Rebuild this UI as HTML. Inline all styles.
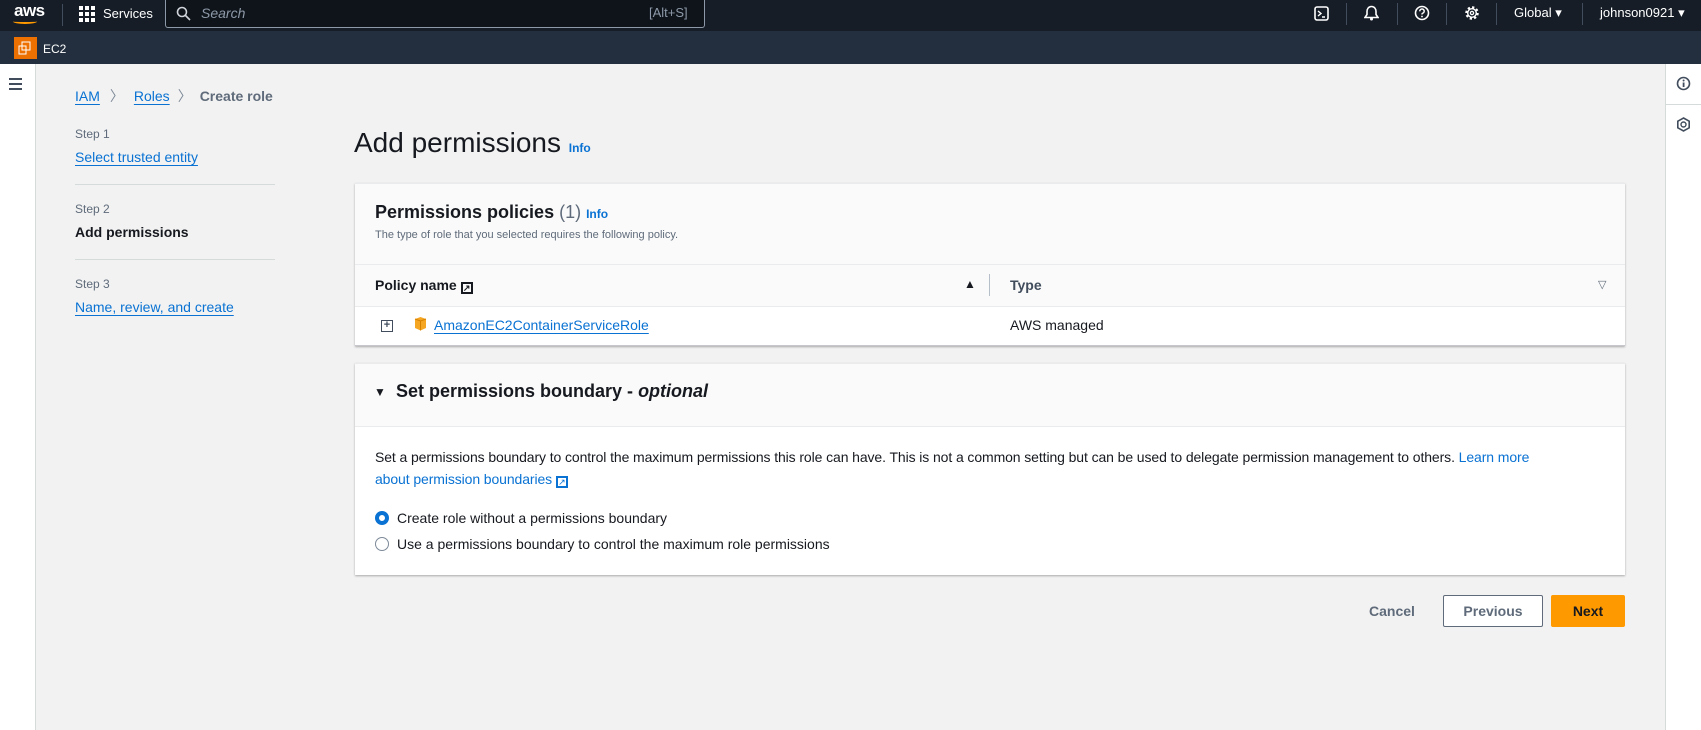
<!DOCTYPE html>
<html><head><style>
*{box-sizing:border-box;margin:0;padding:0}
body{width:1701px;height:730px;overflow:hidden;background:#f2f2f2;font-family:"Liberation Sans",sans-serif;color:#16191f;position:relative;font-size:15px}
.a{position:absolute;white-space:nowrap}
.lnk{color:#0972d3;text-decoration:underline;text-underline-offset:3px}
.top{position:absolute;left:0;top:0;width:1701px;height:31px;background:#161d26}
.sub{position:absolute;left:0;top:31px;width:1701px;height:33px;background:#232f3e}
.w{color:#fff}
.card{position:absolute;background:#fff;box-shadow:0 1px 2px rgba(0,0,0,.3);border-top:1px solid #e9ebed}
</style></head><body>
<div class="top"></div><div class="sub"></div>
<div class="a w" style="left:14px;top:1px;font-size:17px;font-weight:bold;letter-spacing:-0.5px">aws</div>
<div class="a" style="left:13px;top:19px;width:24px;height:5px;border-bottom:2px solid #f90;border-radius:0 0 50% 50%"></div>
<div class="a" style="left:62px;top:4px;width:1px;height:22px;background:#414d5c"></div>
<svg class="a" style="left:79px;top:6px" width="16" height="16"><g fill="#fff"><rect x="0" y="0" width="4" height="4"/><rect x="6" y="0" width="4" height="4"/><rect x="12" y="0" width="4" height="4"/><rect x="0" y="6" width="4" height="4"/><rect x="6" y="6" width="4" height="4"/><rect x="12" y="6" width="4" height="4"/><rect x="0" y="12" width="4" height="4"/><rect x="6" y="12" width="4" height="4"/><rect x="12" y="12" width="4" height="4"/></g></svg>
<div class="a w" style="left:103px;top:6px;font-size:13px">Services</div>
<div class="a" style="left:165px;top:-1px;width:540px;height:29px;border:1px solid #8d99a8;border-top:none;border-radius:0 0 3px 3px;background:#0f141a"></div>
<svg class="a" style="left:176px;top:6px" width="15" height="15"><circle cx="6" cy="6" r="4.5" stroke="#d1d5db" stroke-width="1.6" fill="none"/><line x1="9.5" y1="9.5" x2="14" y2="14" stroke="#d1d5db" stroke-width="1.6"/></svg>
<div class="a" style="left:201px;top:5px;font-size:14px;font-style:italic;color:#8d99a8">Search</div>
<div class="a" style="left:649px;top:5px;font-size:13px;color:#8d99a8">[Alt+S]</div>
<div class="a" style="left:14px;top:37px;width:23px;height:22px;background:#ed7100"></div>
<svg class="a" style="left:17px;top:41px" width="16" height="15"><rect x="5" y="1" width="8" height="8" fill="none" stroke="#fff"/><rect x="2" y="5" width="7" height="8" fill="none" stroke="#fff"/></svg>
<div class="a w" style="left:43px;top:42px;font-size:12px">EC2</div>
<svg class="a" style="left:1314px;top:6px" width="15" height="15"><rect x="1" y="1" width="13" height="13" rx="2" fill="none" stroke="#fff" stroke-width="1.6"/><path d="M4 5l3 2.5-3 2.5M8 11h3" stroke="#fff" stroke-width="1.4" fill="none"/></svg>
<div class="a" style="left:1346px;top:3px;width:1px;height:22px;background:#414d5c"></div>
<svg class="a" style="left:1364px;top:5px" width="15" height="16"><path d="M7.5 1.5c-3 0-4.5 2.5-4.5 5v3l-2 3h13l-2-3v-3c0-2.5-1.5-5-4.5-5z" fill="none" stroke="#fff" stroke-width="1.6"/><circle cx="7.5" cy="14" r="1.5" fill="#fff"/></svg>
<div class="a" style="left:1397px;top:3px;width:1px;height:22px;background:#414d5c"></div>
<svg class="a" style="left:1414px;top:5px" width="16" height="16"><circle cx="8" cy="8" r="6.5" fill="none" stroke="#fff" stroke-width="1.6"/><path d="M5.8 6.3a2.2 2.2 0 1 1 2.7 2c-.5.2-.5.6-.5 1.2" fill="none" stroke="#fff" stroke-width="1.5"/><circle cx="8" cy="11.5" r=".9" fill="#fff"/></svg>
<div class="a" style="left:1446px;top:3px;width:1px;height:22px;background:#414d5c"></div>
<svg class="a" style="left:1464px;top:5px" width="16" height="16"><circle cx="8" cy="8" r="5.5" fill="none" stroke="#fff" stroke-width="2.5" stroke-dasharray="2.2 2.1"/><circle cx="8" cy="8" r="4.3" fill="none" stroke="#fff" stroke-width="1.4"/><circle cx="8" cy="8" r="1.6" fill="none" stroke="#fff" stroke-width="1.3"/></svg>
<div class="a" style="left:1496px;top:3px;width:1px;height:22px;background:#414d5c"></div>
<div class="a w" style="left:1514px;top:5px;font-size:13px">Global ▾</div>
<div class="a" style="left:1582px;top:3px;width:1px;height:22px;background:#414d5c"></div>
<div class="a w" style="left:1600px;top:5px;font-size:13px">johnson0921 ▾</div>

<div class="a" style="left:0;top:64px;width:36px;height:666px;background:#fff;border-right:1px solid #d5dbdb"></div>
<div class="a" style="left:9px;top:78px;width:13px;height:2px;background:#414d5c;box-shadow:0 5px 0 #414d5c,0 10px 0 #414d5c"></div>
<div class="a" style="left:1665px;top:64px;width:36px;height:666px;background:#fff;border-left:1px solid #d5dbdb"></div>
<div class="a" style="left:1665px;top:104px;width:36px;height:1px;background:#d5dbdb"></div>
<svg class="a" style="left:1676px;top:76px" width="15" height="15"><circle cx="7.5" cy="7.5" r="6" fill="none" stroke="#414d5c" stroke-width="1.6"/><rect x="6.7" y="6.5" width="1.8" height="4.5" fill="#414d5c"/><circle cx="7.6" cy="4.5" r="1" fill="#414d5c"/></svg>
<svg class="a" style="left:1676px;top:117px" width="15" height="15"><path d="M7.5 1l5.7 3.2v6.6L7.5 14 1.8 10.8V4.2z" fill="none" stroke="#414d5c" stroke-width="1.6"/><circle cx="7.5" cy="7.5" r="2.5" fill="none" stroke="#414d5c" stroke-width="1.4"/></svg>

<div class="a" style="left:75px;top:86px;font-size:14px"><span class="lnk">IAM</span><span style="color:#7d8998;margin:0 10px">〉</span><span class="lnk">Roles</span><span style="color:#7d8998;margin:0 8px">〉</span><span style="color:#5f6b7a;font-weight:bold">Create role</span></div>

<div class="a" style="left:75px;top:127px;font-size:12px;color:#5f6b7a">Step 1</div>
<div class="a lnk" style="left:75px;top:149px;font-size:14px">Select trusted entity</div>
<div class="a" style="left:75px;top:184px;width:200px;height:1px;background:#d5dbdb"></div>
<div class="a" style="left:75px;top:202px;font-size:12px;color:#5f6b7a">Step 2</div>
<div class="a" style="left:75px;top:224px;font-size:14px;font-weight:bold">Add permissions</div>
<div class="a" style="left:75px;top:259px;width:200px;height:1px;background:#d5dbdb"></div>
<div class="a" style="left:75px;top:277px;font-size:12px;color:#5f6b7a">Step 3</div>
<div class="a lnk" style="left:75px;top:299px;font-size:14px">Name, review, and create</div>

<div class="a" style="left:354px;top:127px;font-size:28px">Add permissions <span style="font-size:12px;font-weight:bold;color:#0972d3">Info</span></div>

<div class="card" style="left:355px;top:183px;width:1270px;height:163px;background:#fafafa"></div>
<div class="a" style="left:375px;top:202px;font-size:18px;font-weight:bold">Permissions policies <span style="font-weight:normal;color:#5f6b7a">(1)</span> <span style="font-size:12px;color:#0972d3">Info</span></div>
<div class="a" style="left:375px;top:229px;font-size:11px;color:#5f6b7a">The type of role that you selected requires the following policy.</div>
<div class="a" style="left:355px;top:264px;width:1270px;height:1px;background:#e9ebed"></div>
<div class="a" style="left:375px;top:277px;font-size:14px;font-weight:bold">Policy name <span style="display:inline-block;width:12px;height:12px;border:2px solid #16191f;vertical-align:-1px;font-size:9px;line-height:8px;text-align:center">↗</span></div>
<div class="a" style="left:964px;top:277px;font-size:12px">▲</div>
<div class="a" style="left:989px;top:274px;width:1px;height:22px;background:#b6bec9"></div>
<div class="a" style="left:1010px;top:277px;font-size:14px;font-weight:bold;color:#414d5c">Type</div>
<div class="a" style="left:1598px;top:278px;font-size:11px;color:#5f6b7a">▽</div>
<div class="a" style="left:355px;top:306px;width:1270px;height:40px;background:#fff;border-top:1px solid #e9ebed;border-bottom:1px solid #c6c6cd"></div>
<div class="a" style="left:381px;top:320px;width:12px;height:12px;border:1.5px solid #414d5c;font-size:11px;line-height:9px;text-align:center;font-weight:bold;color:#414d5c">+</div>
<svg class="a" style="left:414px;top:316px" width="13" height="15"><path d="M1 3l5.5-2 5.5 2v9l-5.5 2.5L1 12z" fill="#f5a623"/><path d="M6.5 5v9.5M1 3l5.5 2 5.5-2" stroke="#d78100" fill="none"/></svg>
<div class="a lnk" style="left:434px;top:317px;font-size:14px">AmazonEC2ContainerServiceRole</div>
<div class="a" style="left:1010px;top:317px;font-size:14px">AWS managed</div>

<div class="card" style="left:355px;top:363px;width:1270px;height:212px"></div>
<div class="a" style="left:355px;top:364px;width:1270px;height:63px;background:#fafafa;border-bottom:1px solid #e9ebed"></div>
<div class="a" style="left:374px;top:385px;font-size:12px">▼</div>
<div class="a" style="left:396px;top:381px;font-size:18px;font-weight:bold">Set permissions boundary - <i>optional</i></div>
<div class="a" style="left:375px;top:446px;font-size:14px;line-height:22px;white-space:nowrap;letter-spacing:-0.1px">Set a permissions boundary to control the maximum permissions this role can have. This is not a common setting but can be used to delegate permission management to others. <span class="lnk" style="text-decoration:none">Learn more<br>about permission boundaries <span style="display:inline-block;width:12px;height:12px;border:2px solid #0972d3;vertical-align:-1px;font-size:9px;line-height:8px;text-align:center">↗</span></span></div>
<div class="a" style="left:375px;top:511px;width:14px;height:14px;border-radius:50%;border:4px solid #0972d3"></div>
<div class="a" style="left:397px;top:510px;font-size:14px">Create role without a permissions boundary</div>
<div class="a" style="left:375px;top:537px;width:14px;height:14px;border-radius:50%;border:1.5px solid #7d8998"></div>
<div class="a" style="left:397px;top:536px;font-size:14px">Use a permissions boundary to control the maximum role permissions</div>

<div class="a" style="left:1369px;top:603px;font-size:14px;font-weight:bold;color:#5f6b7a">Cancel</div>
<div class="a" style="left:1443px;top:595px;width:100px;height:32px;border:1px solid #5f6b7a;border-radius:2px;background:#fff;font-size:14px;font-weight:bold;color:#5f6b7a;text-align:center;line-height:30px">Previous</div>
<div class="a" style="left:1551px;top:595px;width:74px;height:32px;border-radius:2px;background:#ff9900;font-size:14px;font-weight:bold;color:#16191f;text-align:center;line-height:32px">Next</div>
</body></html>
